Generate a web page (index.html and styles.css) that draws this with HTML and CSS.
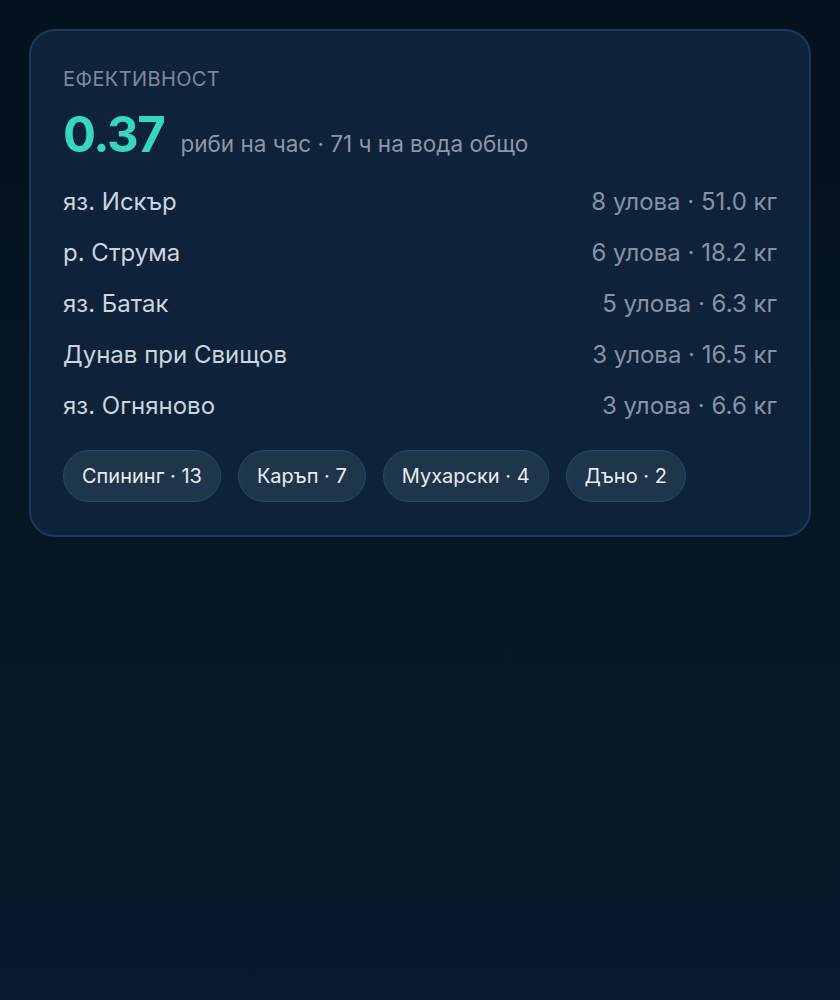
FILE: index.html
```html
<!DOCTYPE html>
<html lang="bg">
<head>
	<meta charset="UTF-8">
	<title>Ефективност</title>
	<link rel="stylesheet" href="styles.css">
</head>
<body>
    <div class="card">
        <div class="label">Ефективност</div>
        <div class="headline">
            <span class="rate">0.37</span>
            <span class="rate_note">риби на час · 71 ч на вода общо</span>
        </div>
        <div class="spots">
            <div class="spot"><span class="spot_name">яз. Искър</span><span class="spot_stat">8 улова · 51.0 кг</span></div>
            <div class="spot"><span class="spot_name">р. Струма</span><span class="spot_stat">6 улова · 18.2 кг</span></div>
            <div class="spot"><span class="spot_name">яз. Батак</span><span class="spot_stat">5 улова · 6.3 кг</span></div>
            <div class="spot"><span class="spot_name">Дунав при Свищов</span><span class="spot_stat">3 улова · 16.5 кг</span></div>
            <div class="spot"><span class="spot_name">яз. Огняново</span><span class="spot_stat">3 улова · 6.6 кг</span></div>
        </div>
        <div class="chips">
            <span class="chip">Спининг · 13</span>
            <span class="chip">Каръп · 7</span>
            <span class="chip">Мухарски · 4</span>
            <span class="chip">Дъно · 2</span>
        </div>
    </div>
</body>
</html>
```

FILE: styles.css
```css
html{
	height: 100%;
	background: linear-gradient(180deg, #04111e 0%, #071b2c 100%);
}
body{
	margin: 0;
	padding: 29px 29px;
	min-height: 100%;
	box-sizing: border-box;
	font-family: Inter, "Noto Sans", sans-serif;
}
.card{
	background: #0e2239;
	border: 2px solid #1b3958;
	border-radius: 26px;
	padding: 34px 32px 33px;
}
.label{
	color: #7b8a9b;
	font-size: 20px;
	text-transform: uppercase;
	letter-spacing: 0.4px;
	line-height: 28px;
}
.headline{
	display: flex;
	align-items: baseline;
	gap: 16px;
	margin-top: 13px;
}
.rate{
	color: #35d7c1;
	font-size: 49px;
	font-weight: 700;
	letter-spacing: -1.4px;
	line-height: 58px;
}
.rate_note{
	color: #8a98a8;
	font-size: 22.5px;
}
.spots{
	margin-top: 12px;
	display: flex;
	flex-direction: column;
}
.spot{
	display: flex;
	justify-content: space-between;
	align-items: center;
	height: 51px;
	font-size: 24px;
}
.spot_name{
	color: #cbd5de;
}
.spot_stat{
	color: #8494a4;
}
.chips{
	display: flex;
	gap: 17px;
	margin-top: 19px;
}
.chip{
	display: inline-flex;
	align-items: center;
	height: 50px;
	padding: 0 18px;
	border: 1px solid #244a6a;
	border-radius: 27px;
	background: #1f3549;
	color: #e6edf3;
	font-size: 20px;
}
```
